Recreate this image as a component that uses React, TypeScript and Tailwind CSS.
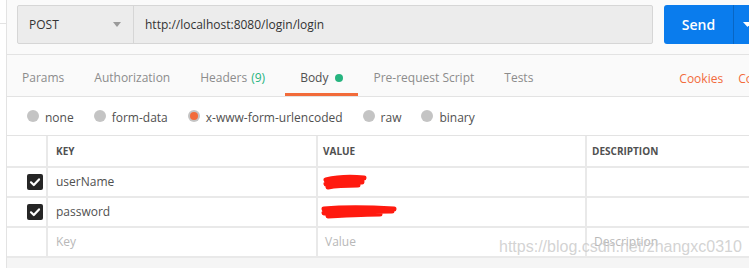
// Postman request builder: url bar, tabs, body type radios and key/value table
import React from "react";

const tabs = [
  { label: "Params" },
  { label: "Authorization" },
  { label: "Headers", count: "(9)" },
  { label: "Body", active: true },
  { label: "Pre-request Script" },
  { label: "Tests" },
];

const bodyTypes = [
  { label: "none" },
  { label: "form-data" },
  { label: "x-www-form-urlencoded", checked: true },
  { label: "raw" },
  { label: "binary" },
];

function Check() {
  return (
    <div className="w-[16px] h-[16px] rounded-[2px] bg-[#262626] flex items-center justify-center">
      <svg width="12" height="12" viewBox="0 0 12 12">
        <path d="M2 6.3 L4.8 9 L10 3.4" fill="none" stroke="#fff" strokeWidth="2.2" strokeLinecap="round" strokeLinejoin="round" />
      </svg>
    </div>
  );
}

export default function App() {
  return (
    <div className="relative w-[749px] h-[268px] overflow-hidden flex bg-[#fafafa] text-[#505050] font-['Open_Sans',sans-serif]">
      {/* 왼쪽 사이드바 가장자리 */}
      <div className="w-[7px] shrink-0 flex flex-col border-r border-[#e3e3e3] bg-white">
        <div className="h-[24px] border-b border-[#e3e3e3] bg-white" />
      </div>

      <div className="flex-1 min-w-0 flex flex-col">
        {/* url bar */}
        <div className="h-[55px] shrink-0 flex items-start pt-[5px] pl-[10px] gap-[11px] border-b border-[#e3e3e3]">
          <div className="w-[636px] h-[39px] shrink-0 flex rounded-[2px] border border-[#d6d6d6] bg-[#ececec]">
            <div className="w-[116px] h-full flex items-center justify-between pl-[11px] pr-[12px] border-r border-[#d6d6d6]">
              <span className="text-[12px] text-[#333]">POST</span>
              <svg width="8" height="5" viewBox="0 0 8 5">
                <path d="M0 0 L8 0 L4 5 Z" fill="#9a9a9a" />
              </svg>
            </div>
            <div className="flex-1 flex items-center pl-[11px] text-[12px] text-[#333]">
              http://localhost:8080/login/login
            </div>
          </div>
          <div className="h-[39px] shrink-0 flex rounded-[3px] bg-[#0a7ced] text-white">
            <div className="w-[69px] flex items-center justify-center text-[14px] font-semibold">Send</div>
            <div className="w-[36px] border-l border-[#0866c4] flex items-center pl-[9px]">
              <svg width="9" height="5" viewBox="0 0 9 5">
                <path d="M0 0 L9 0 L4.5 5 Z" fill="#fff" />
              </svg>
            </div>
          </div>
        </div>

        {/* tabs */}
        <div className="h-[42px] shrink-0 flex items-stretch border-b border-[#e3e3e3] text-[12px]">
          {tabs.map((t) => (
            <div
              key={t.label}
              className={`pl-[15px] ${t.count ? "pr-[20px]" : "pr-[15px]"} flex items-center gap-[7px] pt-[7px] border-b-[3px] ${
                t.active ? "border-[#f26b3a] text-[#505050]" : "border-transparent text-[#8c8c8c]"
              }`}
            >
              <span>{t.label}</span>
              {t.count && <span className="text-[#26b47f] -ml-[3px]">{t.count}</span>}
              {t.active && <span className="w-[8px] h-[8px] rounded-full bg-[#26b47f]" />}
            </div>
          ))}
          <div className="ml-auto mr-[-18px] flex items-center gap-[15px] pt-[6px] text-[#f26b3a]">
            <span>Cookies</span>
            <span>Code</span>
          </div>
        </div>

        {/* body type */}
        <div className="h-[38px] shrink-0 flex items-center pl-[20px] gap-[20px] bg-white text-[12px]">
          {bodyTypes.map((b) => (
            <div key={b.label} className="flex items-center gap-[6px]">
              <span className="w-[12px] h-[12px] rounded-full bg-[#c4c4c4] flex items-center justify-center">
                {b.checked && <span className="w-[8px] h-[8px] rounded-full bg-[#f26b3a]" />}
              </span>
              <span className="text-[#505050] pt-[4px]">{b.label}</span>
            </div>
          ))}
        </div>

        {/* key / value table */}
        <div className="shrink-0 grid grid-cols-[39px_268px_267px_1fr] gap-[2px] bg-[#e9e9e9] border-t border-[#e3e3e3] pb-[2px] text-[12px]">
          <div className="h-[30px] bg-white" />
          <div className="h-[30px] bg-white flex items-center pl-[8px] text-[10px] font-bold text-[#505050]">KEY</div>
          <div className="h-[30px] bg-white flex items-center pl-[5px] text-[10px] font-bold text-[#505050]">VALUE</div>
          <div className="h-[30px] bg-white flex items-center pl-[5px] text-[10px] font-bold text-[#505050]">DESCRIPTION</div>

          <div className="h-[28px] bg-white flex items-center justify-end pr-[3px]"><Check /></div>
          <div className="h-[28px] bg-white flex items-center pl-[8px] text-[#505050]">userName</div>
          <div className="h-[28px] bg-white">
            <svg width="80" height="28" viewBox="0 0 80 28">
              <path d="M8 12 C20 9 36 9 46 10 M8 16 C20 13 34 13 44 14 M10 19 C20 17 30 17 40 17" fill="none" stroke="#ff1a0f" strokeWidth="5" strokeLinecap="round" />
            </svg>
          </div>
          <div className="h-[28px] bg-white" />

          <div className="h-[28px] bg-white flex items-center justify-end pr-[3px]"><Check /></div>
          <div className="h-[28px] bg-white flex items-center pl-[8px] text-[#505050]">password</div>
          <div className="h-[28px] bg-white">
            <svg width="90" height="28" viewBox="0 0 90 28">
              <path d="M6 11 C30 9 58 10 76 11 M6 15 C30 14 58 13 74 13 M10 18 C30 17 50 16 62 16" fill="none" stroke="#ff1a0f" strokeWidth="5" strokeLinecap="round" />
            </svg>
          </div>
          <div className="h-[28px] bg-white" />

          <div className="h-[28px] bg-white" />
          <div className="h-[28px] bg-white flex items-center pl-[8px] text-[#b8b8b8]">Key</div>
          <div className="h-[28px] bg-white flex items-center pl-[7px] text-[#b8b8b8]">Value</div>
          <div className="h-[28px] bg-white flex items-center pl-[7px] text-[#b8b8b8]">Description</div>
        </div>
        <div className="flex-1 bg-[#f5f5f5]" />
      </div>

      {/* 워터마크 */}
      <div className="absolute left-[499px] top-[235px] text-[16px] text-[#c8c8c8]/80 font-['Liberation_Sans',sans-serif] whitespace-nowrap">
        https://blog.csdn.net/zhangxc0310
      </div>
    </div>
  );
}
